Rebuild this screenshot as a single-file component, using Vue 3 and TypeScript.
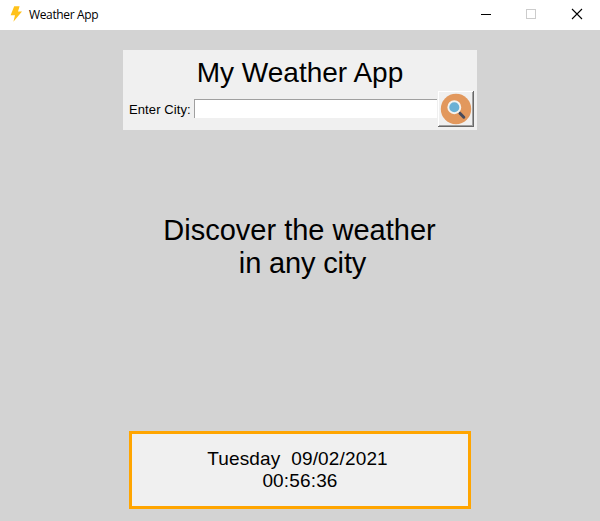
<script setup lang="ts">
import { ref } from 'vue'

const city = ref('')
const day = 'Tuesday'
const date = '09/02/2021'
const time = '00:56:36'
</script>

<template>
  <div class="window">
    <header class="titlebar">
      <svg class="bolt" width="12" height="16" viewBox="0 0 12 16">
        <path d="M4.2 0.2H9.6L8 5.4H12L3.4 15.8L5 9.2H0.6Z" fill="#ffc21a" />
      </svg>
      <span class="caption">Weather App</span>
      <div class="controls">
        <svg width="46" height="30" viewBox="0 0 46 30" shape-rendering="crispEdges">
          <path d="M19 14.5H29" stroke="#000" />
        </svg>
        <svg width="46" height="30" viewBox="0 0 46 30" shape-rendering="crispEdges">
          <rect x="18.5" y="9.5" width="9" height="9" fill="none" stroke="#ccc" />
        </svg>
        <svg width="46" height="30" viewBox="0 0 46 30">
          <path d="M18 9L28 19M28 9L18 19" stroke="#000" stroke-width="1.1" />
        </svg>
      </div>
    </header>

    <main class="content">
      <section class="search">
        <h1 class="heading">My Weather App</h1>
        <form class="row" @submit.prevent>
          <label class="label" for="city">Enter City:</label>
          <input id="city" v-model="city" class="entry" type="text" autocomplete="off" />
          <button class="go" type="submit">
            <svg width="32" height="32" viewBox="0 0 32 32">
              <circle cx="16" cy="16" r="15.2" fill="#e2985d" />
              <path d="M17.8 18.2L20.7 21" stroke="#d8d8d8" stroke-width="2" />
              <path d="M19.9 20.2L23.8 24.2" stroke="#474b5c" stroke-width="3" stroke-linecap="round" />
              <circle cx="14.3" cy="14.2" r="6" fill="#6bb1d5" stroke="#f5f3ef" stroke-width="1.9" />
            </svg>
          </button>
        </form>
      </section>

      <p class="message">Discover the weather<br /><span class="second">in any city</span></p>

      <section class="clock">
        <div class="date">{{ day }}&nbsp; {{ date }}</div>
        <div>{{ time }}</div>
      </section>
    </main>
  </div>
</template>

<style>
body {
  margin: 0;
  overflow: hidden;
}
</style>

<style scoped>
.window {
  display: flex;
  flex-direction: column;
  width: 600px;
  height: 521px;
  background: #d3d3d3;
  color: #000;
  font-family: "Liberation Sans", Arial, sans-serif;
}
.titlebar {
  display: flex;
  align-items: center;
  height: 30px;
  box-sizing: border-box;
  padding-left: 10px;
  background: #fff;
}
.bolt {
  margin-top: -2px;
}
.caption {
  margin-left: 7px;
  font: 12px/30px "Open Sans", "Noto Sans", sans-serif;
  letter-spacing: -0.35px;
}
.controls {
  display: flex;
  margin-left: auto;
}
.controls svg {
  display: block;
}
.content {
  display: flex;
  flex: 1;
  flex-direction: column;
  align-items: center;
  box-sizing: border-box;
  padding: 20px 0 12px;
}
.search {
  box-sizing: border-box;
  width: 354px;
  height: 80px;
  padding: 5px 3px 3px 5px;
  background: #f0f0f0;
}
.heading {
  margin: 0;
  height: 36px;
  padding-right: 2px;
  font-size: 28px;
  line-height: 36px;
  font-weight: 400;
  text-align: center;
}
.row {
  display: flex;
  align-items: center;
  height: 36px;
}
.label {
  width: 66px;
  box-sizing: border-box;
  padding: 2px 0 0 1px;
  font-size: 13px;
  line-height: 18px;
  letter-spacing: 0.1px;
  white-space: nowrap;
}
.entry {
  flex: 1;
  min-width: 0;
  height: 19px;
  box-sizing: border-box;
  margin: 0 1px 1px 0;
  padding: 0 2px;
  border: 0;
  border-top: 1px solid #a0a0a0;
  border-left: 1px solid #a0a0a0;
  border-radius: 0;
  outline: 0;
  background: #fff;
  font: inherit;
  font-size: 13px;
}
.go {
  width: 36px;
  height: 36px;
  box-sizing: border-box;
  padding: 0;
  border: 0;
  background: #f0f0f0;
  box-shadow: inset -1px -1px #696969, inset 1px 1px #fff, inset -2px -2px #a0a0a0;
}
.go svg {
  display: block;
  margin: 2px;
}
.message {
  margin: 84px 0 0;
  padding-right: 1px;
  font-size: 29px;
  line-height: 33px;
  text-align: center;
}
.second {
  padding-left: 6px;
  letter-spacing: -0.15px;
}
.clock {
  box-sizing: border-box;
  width: 342px;
  height: 78px;
  margin-top: auto;
  padding: 14px 0 0;
  border: 3px solid #ffa500;
  background: #f0f0f0;
  font-size: 19px;
  line-height: 22px;
  letter-spacing: 0.15px;
  text-align: center;
}
.date {
  padding-right: 5px;
}
</style>
